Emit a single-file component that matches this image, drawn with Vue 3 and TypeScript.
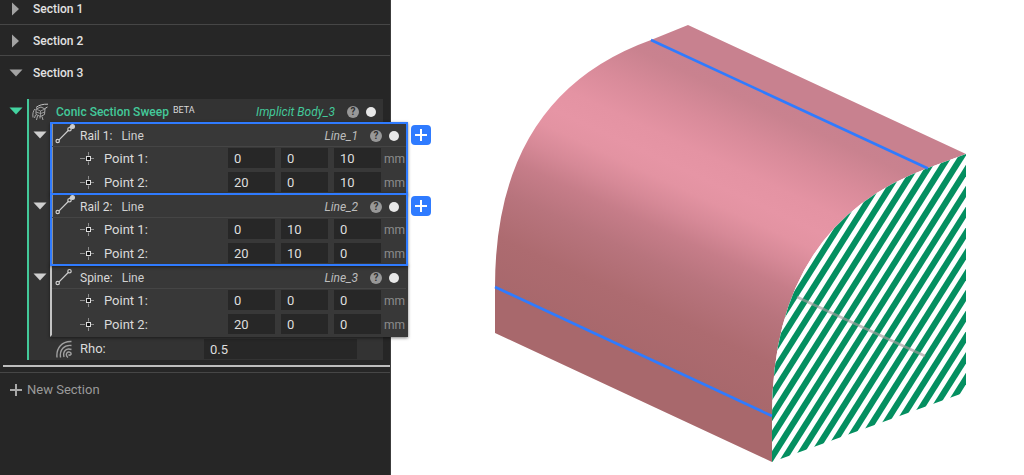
<script setup lang="ts">
import { ref } from 'vue'

interface Point { label: string; values: string[] }
interface Group { role: string; name: string; selected: boolean; points: Point[] }

const sections = ['Section 1', 'Section 2']

const groups = ref<Group[]>([
  {
    role: 'Rail 1:', name: 'Line_1', selected: true,
    points: [
      { label: 'Point 1:', values: ['0', '0', '10'] },
      { label: 'Point 2:', values: ['20', '0', '10'] },
    ],
  },
  {
    role: 'Rail 2:', name: 'Line_2', selected: true,
    points: [
      { label: 'Point 1:', values: ['0', '10', '0'] },
      { label: 'Point 2:', values: ['20', '10', '0'] },
    ],
  },
  {
    role: 'Spine:', name: 'Line_3', selected: false,
    points: [
      { label: 'Point 1:', values: ['0', '0', '0'] },
      { label: 'Point 2:', values: ['20', '0', '0'] },
    ],
  },
])

const rho = ref('0.5')
const axes = ['X', 'Y', 'Z']

// Hatching of the cut face: parallel lines y = c - slope * x
const slope = 1.584
const hatch = Array.from({ length: 24 }, (_, i) => {
  const c = 1721.5 + (i - 13) * 20.8
  return { x1: (c - 140) / slope, x2: (c - 470) / slope }
})
</script>

<template>
  <div class="app">
    <aside class="panel">
      <div v-for="title in sections" :key="title" class="section">
        <button class="caret" :aria-label="'Expand ' + title">
          <svg width="8" height="14" viewBox="0 0 8 14"><path d="M0 0.5L7 7L0 13.5z" fill="#a3a3a3" /></svg>
        </button>
        <h2>{{ title }}</h2>
      </div>

      <div class="section open">
        <button class="caret" aria-label="Collapse Section 3">
          <svg width="14" height="8" viewBox="0 0 14 8"><path d="M0.5 0.5h13L7 7.5z" fill="#a3a3a3" /></svg>
        </button>
        <h2>Section 3</h2>
      </div>

      <div class="tree">
        <button class="caret root-caret" aria-label="Collapse Conic Section Sweep">
          <svg width="14" height="8" viewBox="0 0 14 8"><path d="M0.5 0.5h13L7 7.5z" fill="#43d3a0" /></svg>
        </button>
        <div class="block">
          <header class="block-head">
            <svg class="sweep" width="17" height="18" viewBox="0 0 17 18" fill="none" stroke="#a8a8a8" stroke-width="1">
              <path d="M4 6L9 4L13 6L12.5 11.5L8.5 13.5L4 11.5z" />
              <path d="M4 6L8.5 8L13 6M8.5 8V13.5M4 9L8.5 10.5L13 9" stroke-opacity="0.8" />
              <path d="M4 4.5C7 2 11 1 16 1.2M13 5.5L15.5 4" stroke="#c4c4c4" />
              <path d="M1 14.5C0.5 11 1 8 3 6" />
              <path d="M3.5 12L2.5 15M5.5 13L4.5 17M8 13.5V15.5M10 13.5L11 17" />
            </svg>
            <h3>Conic Section Sweep<sup>BETA</sup></h3>
            <span class="name">Implicit Body_3</span>
            <button class="help" aria-label="Help">?</button>
            <button class="dot" aria-label="Output of Implicit Body_3"></button>
          </header>

          <div v-for="g in groups" :key="g.name" class="group-row">
            <button class="caret group-caret" :aria-label="'Collapse ' + g.role">
              <svg width="14" height="8" viewBox="0 0 14 8"><path d="M0.5 0.5h13L7 7.5z" fill="#cfcfcf" /></svg>
            </button>
            <section class="group" :class="{ selected: g.selected }">
              <div class="group-body">
                <div class="group-head">
                  <svg class="line-icon" width="20" height="20" viewBox="0 0 20 20" fill="none" stroke="#cfcfcf" stroke-width="1.2">
                    <path d="M4 15.8L13.3 6.5" />
                    <circle cx="2.7" cy="17" r="1.7" />
                    <circle cx="14.5" cy="5.2" r="1.7" />
                    <circle v-if="g.selected" cx="17.5" cy="2.6" r="1.9" fill="#cfcfcf" />
                    <path v-if="g.selected" d="M14.5 3.5L17.5 2.2" stroke-width="1.8" />
                  </svg>
                  <span class="role">{{ g.role }}</span>
                  <span class="kind">Line</span>
                  <span class="name">{{ g.name }}</span>
                  <button class="help" aria-label="Help">?</button>
                  <button class="dot" :aria-label="'Output of ' + g.name"></button>
                </div>
                <div class="points">
                  <div v-for="p in g.points" :key="p.label" class="point">
                    <svg width="15" height="15" viewBox="0 0 15 15" fill="none">
                      <path d="M0 7.5H5M11 7.5H14M8.5 1V4.5M8.5 10.5V14" stroke="#8c8c8c" />
                      <rect x="6.5" y="5.5" width="4" height="4" fill="#111" stroke="#dedede" />
                    </svg>
                    <span class="point-label">{{ p.label }}</span>
                    <input
                      v-for="(axis, i) in axes" :key="axis" v-model="p.values[i]" type="text"
                      :aria-label="g.role + ' ' + p.label + ' ' + axis"
                    />
                    <span class="unit">mm</span>
                  </div>
                </div>
              </div>
              <button v-if="g.selected" class="add" :aria-label="'Add to ' + g.role">
                <svg width="12" height="12" viewBox="0 0 12 12"><path d="M6 0V12M0 6H12" stroke="#fff" stroke-width="2" /></svg>
              </button>
            </section>
          </div>

          <div class="rho">
            <svg width="17" height="18" viewBox="0 0 17 18" fill="none" stroke="#a0a0a0" stroke-width="1.4">
              <path d="M1 17.5C0 8 6 1 15.5 1.5" />
              <path d="M4.5 17.5C3.5 10 8 4.5 15.5 5.5" />
              <path d="M8 17C6.5 11.5 10 7.5 15.5 9.5" />
              <path d="M12 17.5C8.5 14.5 11.5 10.5 14.5 12.5C16 14.5 14 16 12.5 14.5" />
            </svg>
            <label for="rho">Rho:</label>
            <input id="rho" v-model="rho" type="text" />
            <span class="slot"></span>
          </div>
        </div>
      </div>

      <div class="drop-line"></div>
      <button class="new-section">
        <svg width="12" height="12" viewBox="0 0 12 12"><path d="M6 0V12M0 6H12" stroke="#a8a8a8" stroke-width="2" /></svg>
        New Section
      </button>
    </aside>

    <main class="viewport">
      <svg viewBox="391 0 633 475" role="img" aria-label="Conic section sweep body">
        <defs>
          <linearGradient id="skin" gradientUnits="userSpaceOnUse" x1="651" y1="40" x2="529.3" y2="302.9">
            <stop offset="0" stop-color="#c8818f" />
            <stop offset="0.05" stop-color="#c9828f" />
            <stop offset="0.17" stop-color="#d98b9a" />
            <stop offset="0.28" stop-color="#e493a3" />
            <stop offset="0.36" stop-color="#e695a5" />
            <stop offset="0.42" stop-color="#e393a2" />
            <stop offset="0.5" stop-color="#d68997" />
            <stop offset="0.58" stop-color="#c67d89" />
            <stop offset="0.69" stop-color="#b8747d" />
            <stop offset="0.84" stop-color="#ad6b70" />
            <stop offset="1" stop-color="#a8686c" />
          </linearGradient>
          <clipPath id="face">
            <path d="M966 154L928 168Q772 225 772 416L772 462L966 392z" />
          </clipPath>
        </defs>
        <path d="M688 25L966 154L928 168Q772 225 772 416V462L495 333V287Q495 96 651 40z" fill="url(#skin)" />
        <path d="M966 154L928 168Q772 225 772 416V462L966 392z" fill="#fff" />
        <g clip-path="url(#face)" stroke="#048f60" stroke-width="6.1">
          <line v-for="(h, i) in hatch" :key="i" :x1="h.x1" y1="140" :x2="h.x2" y2="470" />
        </g>
        <path d="M797 297L925 356" stroke="#a39c9c" stroke-opacity="0.65" stroke-width="2.5" />
        <path d="M651 40L928 168.5M495 287L772 416" stroke="#2f7bff" stroke-width="2.6" />
      </svg>
    </main>
  </div>
</template>

<style>
body {
  margin: 0;
  background: #fff;
}
</style>

<style scoped>
.app {
  display: flex;
  min-height: 100vh;
  font-family: Roboto, "Liberation Sans", sans-serif;
  font-size: 13px;
  line-height: 16px;
  color: #dadada;
}
.app * {
  box-sizing: border-box;
}
button {
  display: flex;
  align-items: center;
  justify-content: center;
  padding: 0;
  border: 0;
  background: none;
  font: inherit;
  color: inherit;
  flex: none;
}
svg {
  display: block;
  flex: none;
}
h2, h3 {
  margin: 0;
  font-size: 12px;
  font-weight: 500;
}
.panel {
  position: relative;
  z-index: 1;
  flex: 0 0 391px;
  background: #262626;
  border-right: 1px solid #3c3c3c;
}
.section {
  display: flex;
  align-items: center;
  height: 31px;
  padding-top: 1px;
  border-bottom: 1px solid #464646;
}
.section:first-child {
  height: 25px;
  padding: 0 0 6px;
}
.section.open {
  height: 33px;
  border-bottom: 0;
}
.section .caret {
  width: 32px;
}
.section h2 {
  padding-left: 1px;
  color: #e2e2e2;
}
.tree {
  display: flex;
  align-items: flex-start;
  margin-top: 10px;
  padding-right: 7px;
}
.root-caret {
  width: 27px;
  height: 24px;
  padding-left: 4px;
}
.block {
  flex: 1;
  min-width: 0;
  background: #333;
  border-left: 2px solid #43c99a;
}
.block-head {
  display: flex;
  align-items: center;
  height: 23px;
  padding: 2px 7px 0 3px;
}
.block-head h3 {
  margin-left: 7px;
  color: #43c99a;
}
sup {
  margin-left: 4px;
  font-size: 9px;
  font-weight: 400;
  line-height: 9px;
  vertical-align: 3px;
  color: #dadada;
}
.name {
  margin-left: auto;
  font-size: 12px;
  font-style: italic;
  color: #bdbdbd;
}
.block-head .name {
  color: #43c99a;
}
.help {
  width: 12px;
  height: 12px;
  margin-left: 12px;
  border-radius: 50%;
  background: #989898;
  color: #303030;
  font-size: 10px;
  font-weight: 700;
  line-height: 12px;
}
.dot {
  width: 10px;
  height: 10px;
  margin-left: 7px;
  border-radius: 50%;
  background: #e8e8e8;
}
.group-row {
  display: flex;
  align-items: flex-start;
  margin: 0 -25px -2px 0;
}
.group-caret {
  width: 21px;
  height: 26px;
}
.group {
  position: relative;
  flex: 1;
  border: 2px solid #383838;
  border-left-color: #c4c4c4;
  background: #383838;
  box-shadow: 0 1px 3px rgba(0, 0, 0, 0.5);
}
.group.selected {
  z-index: 1;
  border-color: #2f7bff;
}
.selected .group-body {
  box-shadow: inset 1px 0 #8f8f8f;
}
.group-head {
  display: flex;
  align-items: center;
  height: 23px;
  padding: 1px 7px 0 3px;
  border-bottom: 1px solid #454545;
}
.line-icon {
  margin-top: -4px;
}
.role, .kind, .unit {
  font-size: 12px;
}
.role {
  margin-left: 5px;
}
.kind {
  margin-left: 9px;
  color: #cfcfcf;
}
.points {
  display: flex;
  flex-direction: column;
  gap: 4px;
  padding: 1px 1px 1px 28px;
}
.point {
  display: flex;
  align-items: center;
  height: 20px;
}
.point-label {
  flex: 1;
  margin-left: 9px;
  padding-top: 2px;
}
input {
  width: 47px;
  height: 20px;
  margin: 0 6px 0 0;
  padding: 1px 6px 0;
  border: 0;
  outline: 0;
  background: #272727;
  font: inherit;
  color: #dedede;
}
.unit {
  width: 21px;
  margin-left: -3px;
  padding-top: 1px;
  color: #8c8c8c;
}
.add {
  position: absolute;
  top: 1px;
  left: 100%;
  width: 20px;
  height: 20px;
  margin-left: 5px;
  border-radius: 4px;
  background: #2f7bff;
}
.rho {
  display: flex;
  align-items: center;
  height: 25px;
  padding: 3px 0 0 27px;
}
.rho label {
  width: 124px;
  margin-left: 7px;
}
.rho input {
  flex: 1;
  margin: 0;
}
.slot {
  width: 26px;
}
.drop-line {
  height: 7px;
  margin: 5px 0 0 3px;
  border-top: 2px solid #bdbdbd;
}
.new-section {
  width: 100%;
  height: 34px;
  justify-content: flex-start;
  gap: 5px;
  padding-left: 10px;
  border-top: 1px solid #464646;
  color: #9a9a9a;
}
.viewport {
  flex: 1;
  min-width: 0;
  background: #fff;
}
.viewport svg {
  width: 100%;
}
</style>
